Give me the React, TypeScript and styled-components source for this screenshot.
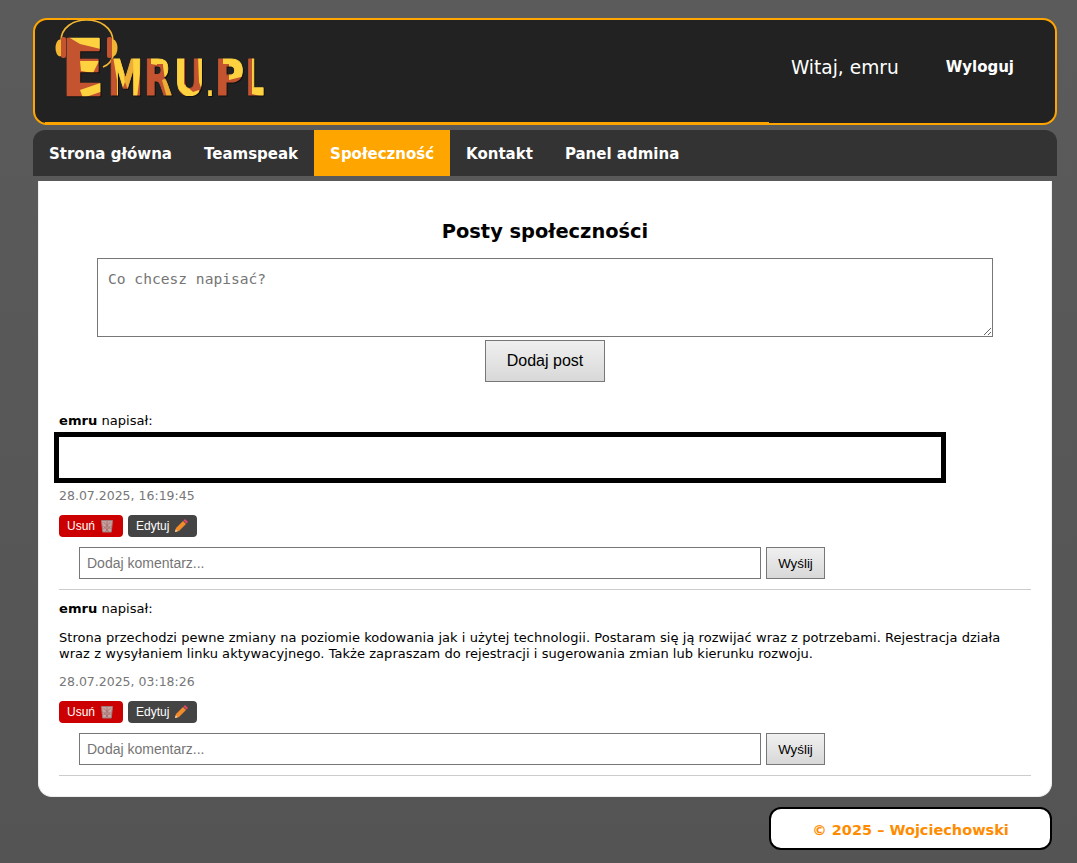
import styled, { createGlobalStyle } from "styled-components";

const GlobalStyle = createGlobalStyle`
  * { box-sizing: border-box; }
  html, body { margin: 0; padding: 0; }
  body {
    background: linear-gradient(#5b5b5b, #545454);
    font-family: "DejaVu Sans", Verdana, sans-serif;
    color: #000;
  }
`;

const Page = styled.div`
  width: 1077px;
  height: 863px;
  padding: 18px 20px 0 33px;
  overflow: hidden;
`;

const Header = styled.header`
  height: 107px;
  background: #222;
  border: 2px solid #ffa500;
  border-radius: 14px;
  display: flex;
  align-items: flex-start;
  justify-content: space-between;
  position: relative;
  &::after {
    content: "";
    position: absolute;
    left: 10px;
    bottom: -2px;
    width: 724px;
    height: 3px;
    background: #ffa500;
  }
`;

const LogoBox = styled.div`
  width: 240px;
  height: 100px;
  margin: 0 0 0 18px;
`;

const UserArea = styled.div`
  display: flex;
  align-items: center;
  height: 94px;
  padding-right: 41px;
  color: #fff;
`;

const Greeting = styled.span`
  font-size: 18.6px;
`;

const Logout = styled.a`
  font-size: 15px;
  font-weight: 700;
  margin-left: 47px;
`;

const Nav = styled.nav`
  height: 46px;
  margin-top: 5px;
  background: #333;
  border-radius: 12px 12px 0 0;
  display: flex;
`;

const NavItem = styled.a<{ $active?: boolean }>`
  display: flex;
  align-items: center;
  padding: 2px 16px 0;
  color: #fff;
  font-size: 15px;
  font-weight: 700;
  background: ${(p) => (p.$active ? "#ffa500" : "transparent")};
`;

const Main = styled.main`
  margin: 5px 5px 0;
  height: 616px;
  background: #fff;
  border-radius: 0 0 14px 14px;
  border: 1px solid #eee;
  border-top: 0;
  padding: 39px 20px 0 20px;
`;

const Title = styled.h2`
  margin: 0;
  font-size: 19.4px;
  line-height: 24px;
  font-weight: 700;
  text-align: center;
`;

const PostForm = styled.form`
  display: flex;
  flex-direction: column;
  align-items: center;
  margin-top: 14px;
`;

const Area = styled.textarea`
  width: 896px;
  height: 79px;
  padding: 11px 10px 10px;
  border: 1px solid #777;
  font-family: "DejaVu Sans Mono", monospace;
  font-size: 14.6px;
  line-height: 17px;
  resize: vertical;
  outline: none;
  &::placeholder { color: #757575; }
`;

const GrayButton = styled.button`
  border: 1px solid #777;
  background: linear-gradient(#f0f0f0, #d8d8d8);
  color: #000;
  font-family: "Liberation Sans", Arial, sans-serif;
`;

const AddButton = styled(GrayButton)`
  width: 120px;
  height: 42px;
  margin-top: 3px;
  font-size: 16px;
`;

const Post = styled.article`
  border-bottom: 1px solid #ccc;
  height: 186px;
  padding-top: 9px;
`;

const FirstPost = styled(Post)`
  margin-top: 29px;
  padding-top: 0;
  height: 179px;
`;

const Author = styled.div`
  font-size: 13.1px;
  line-height: 20px;
  margin-bottom: 1px;
`;

const BlankBox = styled.div`
  width: 892px;
  height: 51px;
  margin-left: -5px;
  border: 5px solid #000;
  background: #fff;
`;

const PostText = styled.p`
  margin: 11px 0 0;
  font-size: 13px;
  line-height: 16px;
  letter-spacing: 0.05px;
`;

const Stamp = styled.div`
  margin-top: 3px;
  font-size: 12.5px;
  line-height: 20px;
  color: #777;
`;

const StampAfterText = styled(Stamp)`
  margin-top: 10px;
`;

const Actions = styled.div`
  display: flex;
  gap: 5px;
  margin-top: 9px;
`;

const ActionButton = styled.button<{ $danger?: boolean }>`
  width: ${(p) => (p.$danger ? "64px" : "69px")};
  height: 22px;
  padding: 0 0 0 8px;
  border: 0;
  border-radius: 4px;
  display: flex;
  align-items: center;
  gap: 5px;
  color: #fff;
  background: ${(p) => (p.$danger ? "#c00" : "#444")};
  font-family: "Liberation Sans", Arial, sans-serif;
  font-size: 12px;
`;

const CommentRow = styled.div`
  display: flex;
  gap: 5px;
  margin: 10px 0 0 20px;
`;

const CommentInput = styled.input`
  width: 682px;
  height: 32px;
  padding: 0 7px;
  border: 1px solid #777;
  font-family: "Liberation Sans", Arial, sans-serif;
  font-size: 14px;
  outline: none;
  &::placeholder { color: #757575; }
`;

const SendButton = styled(GrayButton)`
  width: 59px;
  height: 32px;
  font-size: 13.33px;
`;

const Footer = styled.footer`
  width: 283px;
  height: 43px;
  margin: 10px 0 0 736px;
  padding-top: 7px;
  background: #fff;
  border: 2px solid #000;
  border-radius: 12px;
  color: #ff8c00;
  font-size: 14.5px;
  font-weight: 700;
  line-height: 28px;
  text-align: center;
`;

const LogoLetter = styled.text<{ $weight: number }>`
  font-family: "DejaVu Sans", sans-serif;
  font-weight: 700;
  fill: url(#facets);
  stroke: url(#facets);
  stroke-width: ${(p) => p.$weight}px;
  stroke-linejoin: round;
  filter: drop-shadow(1px 1px 0 #111);
`;

const RED = "#c4532f";
const YELLOW = "#ffd23f";
const AMBER = "#eeae35";

// facets of the lettering, in the logo's own coordinates
const Logo = () => (
  <svg width="240" height="100" viewBox="0 0 240 100">
    <defs>
      <pattern id="facets" patternUnits="userSpaceOnUse" width="240" height="100">
        <rect width="240" height="100" fill={RED} />
        {/* big E */}
        <polygon points="12,15 56,15 56,31 27,24" fill={YELLOW} />
        <polygon points="27,41 46,41 40,53 28,51" fill={YELLOW} />
        <polygon points="27,70 56,60 56,69 30,78" fill={YELLOW} />
        {/* M */}
        <polygon points="60,36 70,36 72,62 66,78 64,78 64,60" fill={YELLOW} />
        <polygon points="70,44 80,36 84,36 82,78 78,78 72,62" fill={AMBER} />
        <polygon points="80,36 91,36 88,46 84,78 81,78" fill={YELLOW} />
        {/* R */}
        <polygon points="98,36 120,36 120,56 112,60 110,46 98,44" fill={YELLOW} />
        <polygon points="104,44 110,44 110,78 104,78" fill={RED} />
        <polygon points="109,60 114,58 120,76 114,78" fill={AMBER} />
        {/* U */}
        <polygon points="122,36 131,36 131,64 140,72 146,70 146,77 132,76 122,66" fill={YELLOW} />
        <polygon points="145,36 153,36 153,64 148,68 146,62" fill={YELLOW} />
        <polygon points="153,66 162,66 162,78 153,78" fill={YELLOW} />
        {/* P */}
        <polygon points="170,36 192,36 192,56 176,60 176,44 170,44" fill={YELLOW} />
        {/* L */}
        <polygon points="199,36 206,36 206,66 214,68 214,78 199,74" fill={YELLOW} />
      </pattern>
    </defs>
    <path d="M8 21 C8 -7 59 -7 60 21 L60 36 Q58 44 50 47" fill="none" stroke="#f2b632" strokeWidth="1.6" />
    <ellipse cx="7" cy="28" rx="4.5" ry="8.5" fill="#f2b632" />
    <rect x="8" y="17" width="5" height="21" rx="2" fill={RED} />
    <ellipse cx="60" cy="28" rx="4.5" ry="8.5" fill="#f2b632" />
    <rect x="54" y="17" width="5" height="21" rx="2" fill={RED} />
    <LogoLetter $weight={2.5} x="9" y="74.5" fontSize="77" textLength="42" lengthAdjust="spacingAndGlyphs">E</LogoLetter>
    <LogoLetter $weight={1.2} x="55" y="75" fontSize="50" textLength="35" lengthAdjust="spacingAndGlyphs">M</LogoLetter>
    <LogoLetter $weight={1.2} x="91" y="75" fontSize="50" textLength="28" lengthAdjust="spacingAndGlyphs">R</LogoLetter>
    <LogoLetter $weight={1.2} x="121" y="75" fontSize="50" textLength="31" lengthAdjust="spacingAndGlyphs">U</LogoLetter>
    <LogoLetter $weight={0} x="153" y="76" fontSize="30" textLength="8" lengthAdjust="spacingAndGlyphs">.</LogoLetter>
    <LogoLetter $weight={1.2} x="162" y="75" fontSize="50" textLength="29" lengthAdjust="spacingAndGlyphs">P</LogoLetter>
    <LogoLetter $weight={1.2} x="193" y="75" fontSize="50" textLength="18" lengthAdjust="spacingAndGlyphs">L</LogoLetter>
  </svg>
);

const Trash = () => (
  <svg width="14" height="14" viewBox="0 0 14 14">
    <path d="M1.5 1.5h11l-1.2 11.5H2.7z" fill="#c9a3a0" stroke="#9c7a78" strokeWidth="1" />
    <path d="M3.5 3l7 7M10.5 3l-7 7M3.5 7l5 5.5M10.5 7l-5 5.5M7 2v10" stroke="#a06a68" strokeWidth="0.8" />
  </svg>
);

const Pencil = () => (
  <svg width="14" height="14" viewBox="0 0 14 14">
    <path d="M1 13l1-4 7-7 3 3-7 7z" fill="#f28c28" />
    <path d="M9.5 1.5l1.5-1.5 3 3-1.5 1.5z" fill="#e8456b" />
    <path d="M1 13l.7-2.7 2 2z" fill="#f5d6a8" />
  </svg>
);

const Buttons = () => (
  <>
    <Actions>
      <ActionButton $danger>Usuń <Trash /></ActionButton>
      <ActionButton>Edytuj <Pencil /></ActionButton>
    </Actions>
    <CommentRow>
      <CommentInput placeholder="Dodaj komentarz..." />
      <SendButton type="button">Wyślij</SendButton>
    </CommentRow>
  </>
);

export default function App() {
  return (
    <Page>
      <GlobalStyle />
      <Header>
        <LogoBox><Logo /></LogoBox>
        <UserArea>
          <Greeting>Witaj, emru</Greeting>
          <Logout>Wyloguj</Logout>
        </UserArea>
      </Header>
      <Nav>
        <NavItem>Strona główna</NavItem>
        <NavItem>Teamspeak</NavItem>
        <NavItem $active>Społeczność</NavItem>
        <NavItem>Kontakt</NavItem>
        <NavItem>Panel admina</NavItem>
      </Nav>
      <Main>
        <Title>Posty społeczności</Title>
        <PostForm>
          <Area placeholder="Co chcesz napisać?" />
          <AddButton type="button">Dodaj post</AddButton>
        </PostForm>
        <FirstPost>
          <Author><b>emru</b> napisał:</Author>
          <BlankBox />
          <Stamp>28.07.2025, 16:19:45</Stamp>
          <Buttons />
        </FirstPost>
        <Post>
          <Author><b>emru</b> napisał:</Author>
          <PostText>
            Strona przechodzi pewne zmiany na poziomie kodowania jak i użytej technologii. Postaram się ją rozwijać wraz z potrzebami. Rejestracja działa wraz z wysyłaniem linku aktywacyjnego. Także zapraszam do rejestracji i sugerowania zmian lub kierunku rozwoju.
          </PostText>
          <StampAfterText>28.07.2025, 03:18:26</StampAfterText>
          <Buttons />
        </Post>
      </Main>
      <Footer>© 2025 – Wojciechowski</Footer>
    </Page>
  );
}
